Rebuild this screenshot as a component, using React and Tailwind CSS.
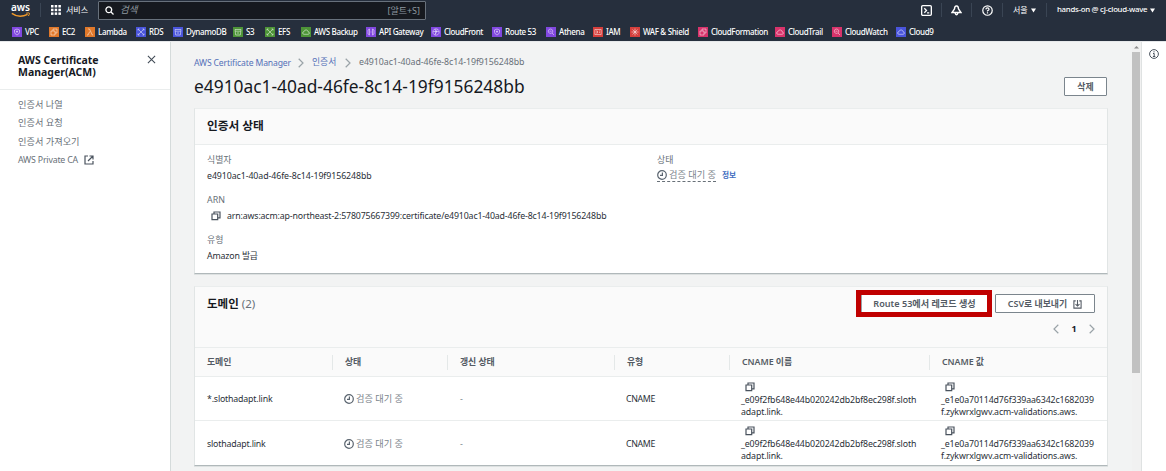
import React from "react";

const services = [
  ["VPC", "w-[37px]", "bg-[#8148e0]", "shield"],
  ["EC2", "w-[36px]", "bg-[#e0782a]", "boxes"],
  ["Lambda", "w-[51px]", "bg-[#e0782a]", "lambda"],
  ["RDS", "w-[37px]", "bg-[#4a55dc]", "expand"],
  ["DynamoDB", "w-[60px]", "bg-[#4a55dc]", "db"],
  ["S3", "w-[32px]", "bg-[#4d9437]", "db"],
  ["EFS", "w-[36px]", "bg-[#4d9437]", "expand"],
  ["AWS Backup", "w-[65px]", "bg-[#4d9437]", "cloud"],
  ["API Gateway", "w-[65px]", "bg-[#8148e0]", "gate"],
  ["CloudFront", "w-[61px]", "bg-[#8148e0]", "globe"],
  ["Route 53", "w-[54px]", "bg-[#8148e0]", "shield"],
  ["Athena", "w-[47px]", "bg-[#8148e0]", "search"],
  ["IAM", "w-[37px]", "bg-[#d63f3c]", "card"],
  ["WAF & Shield", "w-[68px]", "bg-[#d63f3c]", "burst"],
  ["CloudFormation", "w-[77px]", "bg-[#d8336b]", "boxes"],
  ["CloudTrail", "w-[57px]", "bg-[#d8336b]", "cloud"],
  ["CloudWatch", "w-[64px]", "bg-[#d8336b]", "search"],
  ["Cloud9", "w-[60px]", "bg-[#4a55dc]", "cloud"],
];

const glyphs = {
  shield: <path d="M2.5 3 5 2l2.5 1v2.2Q7.200 7.200 5 8 2.800 7.200 2.500 5.200ZM4 4.500h2M5 3.500v2.500" />,
  boxes: <path d="M2 4h4v4H2ZM4 4V2h4v4H6" />,
  lambda: <path d="M3 2h1.500L7.300 8H8M4.800 4.500 3 8H2" />,
  expand: <path d="M2 3.500V2h1.500M6.500 2H8v1.500M8 6.500V8H6.500M3.500 8H2V6.500M2.300 2.300l5.400 5.400M7.700 2.300 2.300 7.700" />,
  db: <path d="M2 2.500h6L7.300 8H2.700ZM2.300 4.200h5.400M4 6h2" />,
  cloud: <path d="M3 7.300Q1.500 7.200 1.600 5.800 1.800 4.700 3 4.700 3.500 2.700 5.200 2.900 6.800 3.100 7 4.700 8.500 4.900 8.400 6.200 8.200 7.300 7 7.300Z" />,
  gate: <path d="M3.500 2 2 3v4l1.500 1ZM6.500 2 8 3v4L6.500 8ZM4.500 5h1" />,
  globe: <path d="M5 1.800a3.200 3.200 0 1 0 .01 0M2.200 4.500h5.600M4 2q2 3 0 6M6.200 2.500 4.500 6.800" />,
  search: <path d="M4.500 2a2.200 2.200 0 1 0 .01 0M6 6l2 2M3.500 4.200h2" />,
  card: <path d="M1.800 2.500h6.400v5H1.800ZM3 4h1.500v2H3M6 4h1M6 5.500h1" />,
  burst: <path d="M5 1.500v7M1.500 5h7M2.500 2.500l5 5M7.500 2.500l-5 5" />,
};

const ServiceIcon = ({ color, kind }) => (
  <span className={`block size-[10px] shrink-0 ${color}`}>
    <svg viewBox="0 0 10 10" className="block size-[10px]" fill="none" stroke="#fff" strokeOpacity=".7" strokeWidth=".7">
      {glyphs[kind]}
    </svg>
  </span>
);

const Copy = () => (
  <svg viewBox="0 0 10 10" className="block size-[10px] shrink-0" fill="none" stroke="#4a535e" strokeWidth="1.200">
    <path d="M1 3h5.700v5.700H1ZM3 3V1h6v5.800H6.900" />
  </svg>
);

const Clock = () => (
  <svg viewBox="0 0 10 10" className="block size-[10px] shrink-0" fill="none" stroke="#5a646f" strokeWidth="1.200">
    <circle cx="5" cy="5" r="4.300" />
    <path d="M5.400 2.600V5.300H3" />
  </svg>
);

const Chevron = ({ left }) => (
  <svg viewBox="0 0 6 10" className="block h-[10px] w-[6px] shrink-0" fill="none" stroke="#9aa3a8" strokeWidth="1.200">
    <path d={left ? "M5.300.8 1 5l4.300 4.200" : "M.7.8 5 5 .7 9.200"} />
  </svg>
);

const Caret = () => (
  <svg viewBox="0 0 6 5" className="block h-[5px] w-[5px] shrink-0" fill="#fff"><path d="M0 0h6L3 5Z" /></svg>
);

const Sep = () => <span className="h-[14px] w-px shrink-0 bg-[#3a4554]" />;

const Header = () => (
  <header className="h-[41px] shrink-0 bg-[#262f3d] text-white">
    <div className="flex h-[20px] items-center">
      <div className="ml-[11px] flex h-[16px] w-[20px] shrink-0 flex-col">
        <span className="h-[10px] whitespace-nowrap text-[10px] font-semibold leading-[11px] tracking-[-0.100px]">aws</span>
        <svg viewBox="0 0 20 6" className="h-[6px] w-[20px] shrink-0" fill="none" stroke="#f29b2c">
          <path d="M.8 1.400Q8 6.600 16.600 2.400" strokeWidth="1.300" />
          <path d="M15.200 1.200q3-.7 3.200 0 .2.900-1 2.800" strokeWidth="1" />
        </svg>
      </div>
      <span className="ml-[9px] h-[14px] w-px bg-[#3a4554]" />
      <svg viewBox="0 0 10 10" className="ml-[10px] size-[10px]" fill="#fff">
        {[0, 3.7, 7.4].map((y) => [0, 3.7, 7.4].map((x) => <rect key={`${x}-${y}`} x={x} y={y} width="2.500" height="2.500" />))}
      </svg>
      <span className="ml-[5px] w-[32px] whitespace-nowrap text-[8px]">서비스</span>
      <div className="mt-px flex h-[19px] w-[328px] shrink-0 items-center rounded-[1px] border border-[#68717c] bg-[#16191f] text-[#8f9aa0]">
        <svg viewBox="0 0 9 9" className="ml-[6px] size-[9px]" fill="none" stroke="#fff" strokeWidth="1.300">
          <circle cx="3.800" cy="3.800" r="2.900" /><path d="m6 6 2.500 2.500" />
        </svg>
        <span className="ml-[6px] text-[9.500px] italic">검색</span>
        <span className="ml-auto mr-[5px] text-[9px]">[알트+S]</span>
      </div>
      <div className="ml-[495px] flex shrink-0 items-center">
        <svg viewBox="0 0 10 10" className="size-[11px]" fill="none" stroke="#fff" strokeWidth="1.200">
          <rect x=".6" y=".6" width="8.800" height="8.800" rx="1" /><path d="M3 3l2 2-2 2M5.500 7.200H7.500" />
        </svg>
        <span className="ml-[9px]" /><Sep />
        <svg viewBox="0 0 10 10" className="ml-[9px] size-[11px]" fill="none" stroke="#fff" strokeWidth="1.300">
          <path d="M5 .8Q6.800 1 6.800 3.500L9 6.800H1L3.200 3.500Q3.200 1 5 .8ZM3.700 7.300q1.300 3.200 2.600 0" />
        </svg>
        <span className="ml-[9px]" /><Sep />
        <svg viewBox="0 0 10 10" className="ml-[10px] size-[11px]" fill="none" stroke="#fff" strokeWidth="1.100">
          <circle cx="5" cy="5" r="4.300" /><path d="M3.500 4Q3.600 2.700 5 2.700T6.400 4Q6.300 4.700 5 5.200V6M5 6.700v1" />
        </svg>
        <span className="ml-[9px]" /><Sep />
        <span className="ml-[10px] w-[18px] whitespace-nowrap text-[8px]">서울</span>
        <Caret />
        <span className="ml-[10px]" /><Sep />
        <span className="ml-[10px] w-[93px] whitespace-nowrap text-[7.800px] font-medium tracking-[-0.270px]">hands-on @ cj-cloud-wave</span>
        <Caret />
      </div>
    </div>
    <nav className="flex h-[21px] items-center pl-[12px] pt-[2px]">
      {services.map(([name, width, color, kind]) => (
        <div key={name} className={`flex shrink-0 items-center gap-[3px] whitespace-nowrap text-[8px] font-medium tracking-[-0.350px] ${width}`}>
          <ServiceIcon color={color} kind={kind} />
          <span>{name}</span>
        </div>
      ))}
    </nav>
  </header>
);

const Sidebar = () => (
  <aside className="w-[171px] shrink-0 border-r border-[#d5dbdb] bg-white">
    <div className="flex h-[48px] justify-between border-b border-[#eaeded] pl-[18px] pr-[14px] pt-[12px]">
      <h2 className="text-[10.500px] font-bold leading-[12px] text-[#16191f]">AWS Certificate<br />Manager(ACM)</h2>
      <svg viewBox="0 0 10 10" className="mt-px size-[9px]" fill="none" stroke="#414b56" strokeWidth="1.200"><path d="m1 1 8 8M9 1 1 9" /></svg>
    </div>
    <nav className="flex flex-col pl-[18px] pt-[6px] text-[9.200px] leading-[18.400px] text-[#687078]">
      <span>인증서 나열</span>
      <span>인증서 요청</span>
      <span>인증서 가져오기</span>
      <span className="flex items-center gap-[5px] text-[8.800px] tracking-[-0.200px]">
        <span className="w-[61px] whitespace-nowrap">AWS Private CA</span>
        <svg viewBox="0 0 10 10" className="size-[10px]" fill="none" stroke="#4a535e" strokeWidth="1.200">
          <path d="M4 1H1v8h8V6M5.500 1H9v3.500M9 1 4 6" />
        </svg>
      </span>
    </nav>
  </aside>
);

const Status = ({ dashed }) => (
  <span className={`flex h-[13px] w-[59px] items-center gap-[2px] whitespace-nowrap text-[9.200px] text-[#7c858c] ${dashed ? "border-b border-dashed border-[#687078]" : ""}`}>
    <Clock />
    <span>검증 대기 중</span>
  </span>
);

const Label = ({ children }) => <div className="h-[16px] text-[8.900px] leading-[16px] text-[#687078]">{children}</div>;

const cardClass = "shrink-0 border border-t-[#eaeded] border-x-[#e1e5e5] border-b-[#b0b8ba] bg-white shadow-[0_1px_0_#dde1e1]";

const StatusCard = () => (
  <section className={`h-[166px] w-[914px] ${cardClass}`}>
    <div className="flex h-[36px] items-center border-b border-[#eaeded] bg-[#fafafa] pb-[2px] pl-[12px]">
      <h2 className="text-[11.700px] font-bold text-[#16191f]">인증서 상태</h2>
    </div>
    <div className="flex pl-[12px] pt-[7px] text-[8.800px] text-[#2a3038]">
      <div className="flex w-[450px] flex-col">
        <Label>식별자</Label>
        <div className="mb-[8px] h-[16px] leading-[16px] tracking-[-0.080px]">e4910ac1-40ad-46fe-8c14-19f9156248bb</div>
        <Label>ARN</Label>
        <div className="mb-[8px] flex h-[16px] items-center pl-[4px] leading-[16px] tracking-[-0.150px]">
          <Copy /><span className="ml-[6px] whitespace-nowrap">arn:aws:acm:ap-northeast-2:578075667399:certificate/e4910ac1-40ad-46fe-8c14-19f9156248bb</span>
        </div>
        <Label>유형</Label>
        <div className="h-[16px] leading-[16px] tracking-[-0.150px]">Amazon 발급</div>
      </div>
      <div>
        <Label>상태</Label>
        <div className="flex h-[16px] items-center gap-[6px] pb-px">
          <Status dashed />
          <span className="text-[7.700px] font-bold text-[#3d6cc0]">정보</span>
        </div>
      </div>
    </div>
  </section>
);

const columns = [
  ["도메인", "w-[138px]"],
  ["상태", "w-[115px]"],
  ["갱신 상태", "w-[167px]"],
  ["유형", "w-[115px]"],
  ["CNAME 이름", "w-[200px]"],
  ["CNAME 값", "w-[177px]"],
];

const Cname = ({ lines }) => (
  <div className="pt-[5px] leading-[12.300px] tracking-[-0.130px]">
    <span className="mb-[2px] block pl-[4px]"><Copy /></span>
    {lines.map((line) => <div key={line} className="whitespace-nowrap">{line}</div>)}
  </div>
);

const Row = ({ domain, last }) => (
  <div className={`flex h-[44px] items-center text-[8.800px] text-[#2a3038] ${last ? "" : "border-b border-[#eaeded]"}`}>
    <div className="w-[149px] pl-[12px] pt-[3px] tracking-[-0.180px]">{domain}</div>
    <div className="w-[116px] pt-px"><Status /></div>
    <div className="w-[166px] pt-[3px] text-[#7c858c]">-</div>
    <div className="w-[115px] pt-[3px] tracking-[-0.350px]">CNAME</div>
    <div className="w-[200px] self-start"><Cname lines={["_e09f2fb648e44b020242db2bf8ec298f.sloth", "adapt.link."]} /></div>
    <div className="self-start"><Cname lines={["_e1e0a70114d76f339aa6342c1682039", "f.zykwrxlgwv.acm-validations.aws."]} /></div>
  </div>
);

const buttonClass = "flex h-[19px] items-center justify-center whitespace-nowrap rounded-[1px] border border-[#7b858d] bg-white pt-px text-[8.900px] font-semibold text-[#545b64]";

const DomainCard = () => (
  <section className={`mt-[12px] h-[180px] w-[914px] ${cardClass}`}>
    <div className="h-[61px] border-b border-[#eaeded] bg-[#fafafa] pl-[12px]">
      <div className="flex h-[33px] items-center pr-[12px]">
        <h2 className="text-[11.500px] font-bold text-[#16191f]">도메인 <span className="font-normal text-[#687078]">(2)</span></h2>
        <div className="ml-auto h-[27px] w-[136px] border-[5px] border-[#c00000] bg-white">
          <div className="flex h-[17px] items-center justify-center whitespace-nowrap border-l border-[#9aa3a8] pt-px text-[9.100px] font-semibold text-[#545b64]">Route 53에서 레코드 생성</div>
        </div>
        <button className={`ml-[3px] w-[100px] gap-[6px] ${buttonClass}`}>
          CSV로 내보내기
          <svg viewBox="0 0 10 10" className="size-[9px]" fill="none" stroke="#545b64" strokeWidth="1.200">
            <path d="M3 1H1v8h8V1H7M5 0v6.500M2.800 4.500 5 6.700l2.200-2.200" />
          </svg>
        </button>
      </div>
      <div className="flex h-[17px] items-center justify-end pr-[12px]">
        <Chevron left />
        <span className="w-[30px] text-center text-[9px] font-bold text-[#16191f]">1</span>
        <Chevron />
      </div>
    </div>
    <div className="flex h-[29px] items-center border-b border-[#eaeded] bg-[#fafafa] text-[8.900px] font-semibold text-[#545b64]">
      {columns.map(([name, width], i) => (
        <div key={name} className={`flex h-[15px] shrink-0 items-center pl-[12px] tracking-[-0.050px] ${width} ${i < 5 ? "border-r border-[#e4e8e8]" : ""}`}>{name}</div>
      ))}
    </div>
    <Row domain="*.slothadapt.link" />
    <Row domain="slothadapt.link" last />
  </section>
);

export default function App() {
  return (
    <div className="flex h-[471px] w-[1166px] flex-col overflow-hidden bg-white [font-family:'Noto_Sans','Noto_Sans_CJK_KR',sans-serif]">
      <Header />
      <div className="flex min-h-0 flex-1 border-t border-[#e6e8ea]">
        <Sidebar />
        <main className="flex w-[961px] shrink-0 flex-col overflow-hidden bg-[#f2f3f3] pl-[23px]">
          <div className="mt-[12px] flex h-[18px] shrink-0 items-center whitespace-nowrap text-[8.800px] text-[#687078]">
            <span className="w-[104px] text-[8.600px] tracking-[-0.130px] text-[#5470b8]">AWS Certificate Manager</span>
            <Chevron />
            <span className="ml-[8px] w-[33px] text-[#5470b8]">인증서</span>
            <Chevron />
            <span className="ml-[8px] tracking-[-0.060px]">e4910ac1-40ad-46fe-8c14-19f9156248bb</span>
          </div>
          <div className="flex h-[36px] shrink-0 items-center justify-between pb-[7px] pr-[25px]">
            <h1 className="text-[17.380px] text-[#16191f]">e4910ac1-40ad-46fe-8c14-19f9156248bb</h1>
            <button className={`w-[43px] ${buttonClass}`}>삭제</button>
          </div>
          <StatusCard />
          <DomainCard />
        </main>
        <div className="w-[10px] shrink-0 border-r border-[#dfe2e2] bg-[#f1f1f1]">
          <svg viewBox="0 0 9 10" className="block h-[10px] w-[9px]" fill="#8c8c8c"><path d="M2 6.500h5L4.500 4Z" /></svg>
          <div className="h-[321px] w-[8px] bg-[#c1c1c1]" />
        </div>
        <div className="flex-1 bg-white pl-[7px] pt-[7px]">
          <svg viewBox="0 0 10 10" className="size-[10px]" fill="none" stroke="#4a535e" strokeWidth="1">
            <circle cx="5" cy="5" r="4.400" /><path d="M5 2.200v1.200M4 4.500h1.200V7.500M3.900 7.500h2.400" />
          </svg>
        </div>
      </div>
    </div>
  );
}
